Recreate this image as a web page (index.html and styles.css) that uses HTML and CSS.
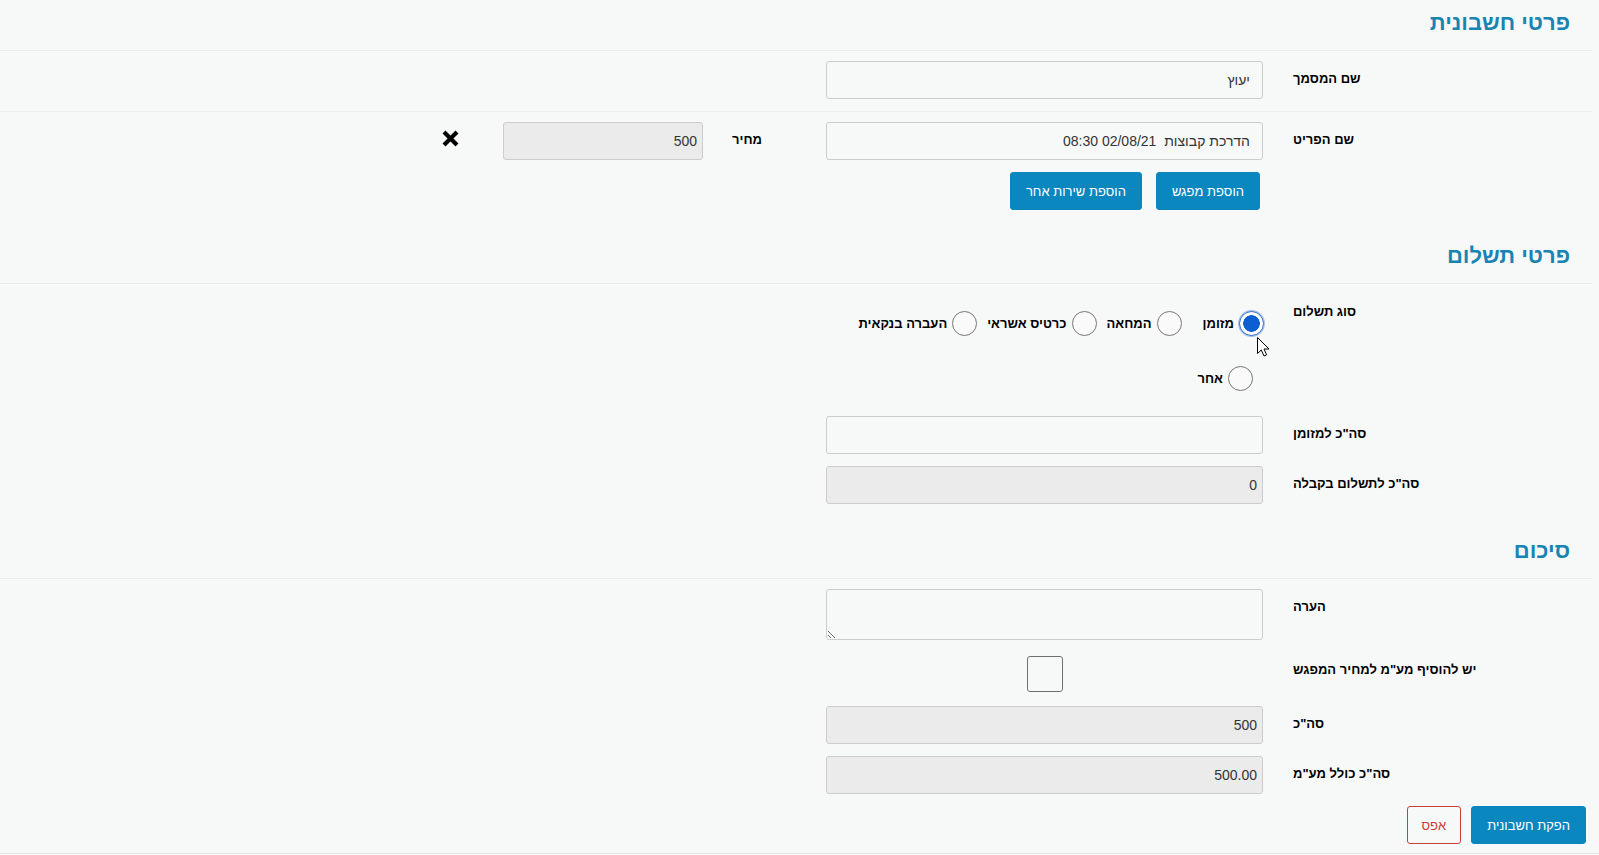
FILE: index.html
```html
<!DOCTYPE html>
<html lang="he" dir="rtl">
<head>
<meta charset="utf-8">
<title>הפקת חשבונית</title>
<link rel="stylesheet" href="styles.css">
</head>
<body>
<main class="page">
  <section class="section">
    <h2 class="section-head">פרטי חשבונית</h2>
    <div class="section-body">
      <div class="field field--divided">
        <label class="field-label">שם המסמך</label>
        <div class="field-control"><input class="input" type="text" value="יעוץ"></div>
      </div>
      <div class="field">
        <label class="field-label">שם הפריט</label>
        <div class="field-control"><input class="input" type="text" value="הדרכת קבוצות  02/08/21 08:30"></div>
        <label class="sub-label">מחיר</label>
        <input class="input input--readonly input--num input--price" type="text" value="500" readonly>
        <button class="remove-btn" type="button" aria-label="הסרה">
          <svg width="17" height="17" viewBox="0 0 17 17"><path d="M2 2 L15 15 M15 2 L2 15" stroke="#000" stroke-width="4.2" fill="none"/></svg>
        </button>
      </div>
      <div class="item-actions">
        <button class="btn btn--primary" type="button">הוספת מפגש</button>
        <button class="btn btn--primary" type="button">הוספת שירות אחר</button>
      </div>
    </div>
  </section>

  <section class="section section--payment">
    <h2 class="section-head">פרטי תשלום</h2>
    <div class="section-body">
      <div class="field">
        <span class="field-label">סוג תשלום</span>
        <div class="field-control radio-group">
          <label class="radio radio--checked"><input type="radio" name="pay" checked><span>מזומן</span></label>
          <label class="radio"><input type="radio" name="pay"><span>המחאה</span></label>
          <label class="radio"><input type="radio" name="pay"><span>כרטיס אשראי</span></label>
          <label class="radio"><input type="radio" name="pay"><span>העברה בנקאית</span></label>
          <label class="radio"><input type="radio" name="pay"><span>אחר</span></label>
        </div>
      </div>
      <div class="field field--after-radios">
        <label class="field-label">סה"כ למזומן</label>
        <div class="field-control"><input class="input" type="text" value=""></div>
      </div>
      <div class="field">
        <label class="field-label">סה"כ לתשלום בקבלה</label>
        <div class="field-control"><input class="input input--readonly input--num" type="text" value="0" readonly></div>
      </div>
    </div>
  </section>

  <section class="section section--summary">
    <h2 class="section-head">סיכום</h2>
    <div class="section-body">
      <div class="field">
        <label class="field-label">הערה</label>
        <div class="field-control"><textarea class="input textarea"></textarea></div>
      </div>
      <div class="field field--check">
        <label class="field-label field-label--tight">יש להוסיף מע"מ למחיר המפגש</label>
        <div class="field-control check-control"><input class="checkbox" type="checkbox"></div>
      </div>
      <div class="field field--after-check">
        <label class="field-label">סה"כ</label>
        <div class="field-control"><input class="input input--readonly input--num" type="text" value="500" readonly></div>
      </div>
      <div class="field">
        <label class="field-label">סה"כ כולל מע"מ</label>
        <div class="field-control"><input class="input input--readonly input--num" type="text" value="500.00" readonly></div>
      </div>
      <div class="form-actions">
        <button class="btn btn--primary" type="button">הפקת חשבונית</button>
        <button class="btn btn--outline-danger" type="button">אפס</button>
      </div>
    </div>
  </section>
</main>
<footer class="page-footer"></footer>

<svg class="cursor" width="13" height="20" viewBox="0 0 13 20"><path d="M0.5 0.5 L0.5 16.5 L4.3 13 L7 19 L9.6 17.9 L7 12 L12 12 Z" fill="#fff" stroke="#000" stroke-width="1" stroke-linejoin="miter"/></svg>
</body>
</html>
```

FILE: styles.css
```css
* { box-sizing: border-box; }

html, body { margin: 0; }

body {
  position: relative;
  min-height: 855px;
  background: #f7f9f9;
  color: #000;
  font-family: "Liberation Sans", Arial, sans-serif;
  direction: rtl;
}

.page { margin-right: 7px; }

.section-head {
  margin: 0;
  padding: 9px 22px 13px 0;
  font-size: 22px;
  line-height: 28px;
  font-weight: 700;
  color: #1884b3;
  border-bottom: 1px solid #e8eded;
}

.section--payment { margin-top: 23px; }
.section--summary { margin-top: 24px; }

.section-body { padding-top: 10px; }

.field {
  display: flex;
  align-items: flex-start;
  padding-right: 22px;
}

.field + .field { margin-top: 12px; }
.field--divided { padding-bottom: 12px; border-bottom: 1px solid #e8eded; }
.field--divided + .field { margin-top: 10px; }
.field--after-radios { margin-top: 12px; }
.field + .field--check { margin-top: 16px; }
.field--check + .field--after-check { margin-top: 14px; }

.field-label {
  flex: none;
  width: 277px;
  padding-top: 9px;
  font-size: 13px;
  line-height: 18px;
  font-weight: 700;
  text-align: left;
}

.field-label--tight { padding-top: 5px; }

.field-control {
  flex: none;
  width: 437px;
  margin-right: 30px;
}

.input {
  display: block;
  width: 100%;
  height: 38px;
  margin: 0;
  padding: 0 12px;
  border: 1px solid #cccccc;
  border-radius: 3px;
  background: transparent;
  color: #333;
  font-family: "Liberation Sans", Arial, sans-serif;
  font-size: 14px;
  direction: rtl;
  outline: none;
}

.input--readonly { background: #ebebeb; }
.input--num { padding-right: 5px; }
.input--price { flex: none; width: 200px; }

.textarea { height: 51px; resize: vertical; padding-top: 6px; }

.sub-label {
  flex: none;
  width: 59px;
  margin-right: 64px;
  padding-top: 9px;
  font-size: 13px;
  line-height: 18px;
  font-weight: 700;
}

.remove-btn {
  flex: none;
  display: flex;
  align-items: center;
  width: 17px;
  height: 33px;
  margin-right: 44px;
  padding: 0;
  border: 0;
  background: none;
}

.item-actions {
  display: flex;
  gap: 14px;
  margin-top: 12px;
  padding-right: 332px;
}

.btn {
  height: 38px;
  padding: 0 15px;
  border: 1px solid transparent;
  border-radius: 3px;
  font-family: "Liberation Sans", Arial, sans-serif;
  font-size: 13px;
}

.btn--primary { background: #0b87bf; border-color: #0b87bf; color: #fff; }
.btn--outline-danger { background: transparent; border-color: #c9403a; color: #c9403a; padding: 0 14px; }

.radio-group {
  display: flex;
  flex-wrap: wrap;
  column-gap: 10px;
  row-gap: 30px;
  padding: 17px 10px 13px 0;
}

.radio {
  display: flex;
  align-items: center;
  gap: 5px;
  height: 25px;
  font-size: 13px;
  font-weight: 700;
}

.radio input {
  appearance: none;
  -webkit-appearance: none;
  flex: none;
  width: 25px;
  height: 25px;
  margin: 0;
  border: 1px solid #777;
  border-radius: 50%;
  background: #fafafa;
}

.radio input:checked {
  border-color: #2566c6;
  background: radial-gradient(circle, #0b5fd1 0 8px, #fff 8.6px);
  box-shadow: 0 0 0 1px #a9c1e6;
}

.radio--checked { margin-right: -11px; margin-left: 11px; }

.check-control { display: flex; justify-content: center; }

.checkbox {
  appearance: none;
  -webkit-appearance: none;
  width: 36px;
  height: 36px;
  margin: 0;
  border: 1px solid #6f6f6f;
  border-radius: 3px;
  background: transparent;
}

.form-actions {
  display: flex;
  gap: 10px;
  margin-top: 12px;
  padding-right: 6px;
}

.page-footer {
  margin-top: 9px;
  border-top: 1px solid #e3e9eb;
}

.cursor {
  position: absolute;
  left: 1257px;
  top: 337px;
}
```
